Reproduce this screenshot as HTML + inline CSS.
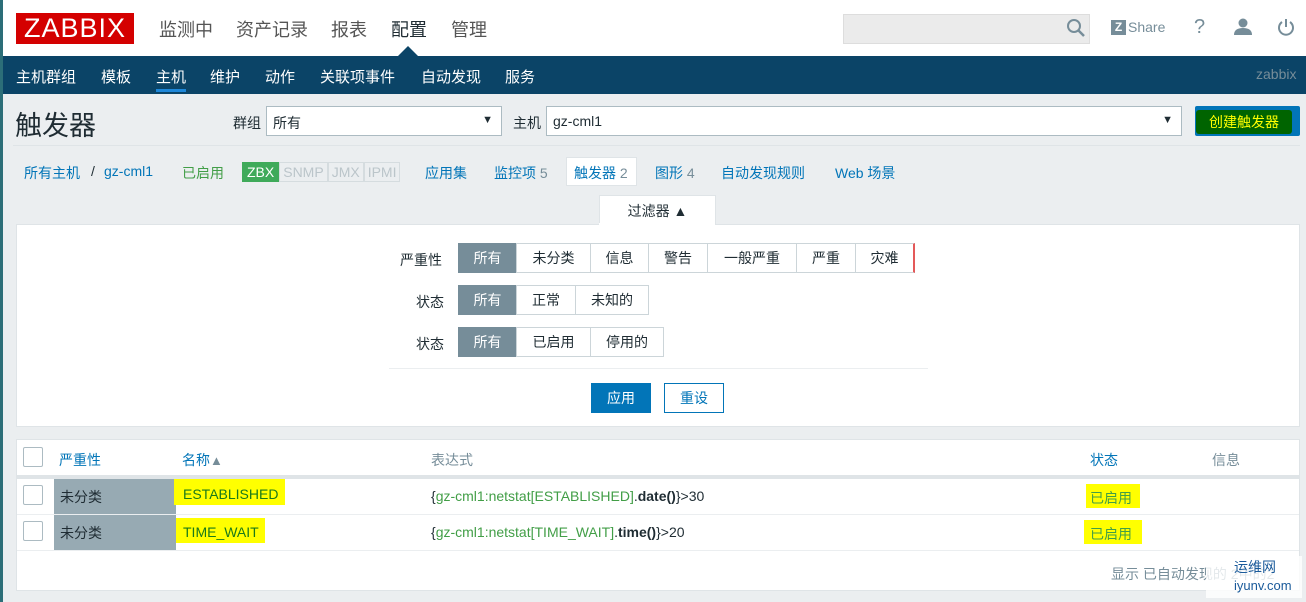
<!DOCTYPE html><html><head><meta charset="utf-8"><style>
*{box-sizing:border-box;margin:0;padding:0}
body{width:1306px;height:602px;overflow:hidden;background:#ebeef0;font-family:"Liberation Sans","Noto Sans CJK SC",sans-serif;font-size:14px;color:#1f2c33;position:relative}
.a{position:absolute;white-space:nowrap}
a{color:#0275b8;text-decoration:none}
.btn{position:absolute;height:30px;border:1px solid #ccd5d9;background:#fff;text-align:center;line-height:28px;font-size:14px}
.sel{background:#768d99;color:#fff;border-color:#768d99}
.n{position:absolute;top:66px;color:#fff;font-size:15px}
.h{position:absolute;top:16px;font-size:18px;color:#555}
</style></head><body>
<div class="a" style="left:0;top:0;width:3px;height:602px;background:#2c6e78"></div>
<div class="a" style="left:3px;top:0;width:1303px;height:56px;background:#fff"></div>
<div class="a" style="left:16px;top:13px;width:118px;height:31px;background:#d40000;color:#fff;font-size:27px;line-height:31px;text-align:center;letter-spacing:1px">ZABBIX</div>
<span class="h" style="left:159px">监测中</span><span class="h" style="left:236px">资产记录</span><span class="h" style="left:331px">报表</span><span class="h" style="left:391px;color:#1f2c33">配置</span><span class="h" style="left:451px">管理</span>
<div class="a" style="left:398px;top:46px;width:0;height:0;border-left:10px solid transparent;border-right:10px solid transparent;border-bottom:10px solid #0b4467"></div>
<div class="a" style="left:843px;top:14px;width:247px;height:30px;background:#ebebeb;border:1px solid #ddd"></div>
<svg class="a" style="left:1066px;top:18px" width="20" height="20"><circle cx="8" cy="8" r="6" fill="none" stroke="#768d99" stroke-width="2"/><line x1="12" y1="12" x2="18" y2="18" stroke="#768d99" stroke-width="2.5"/></svg>
<div class="a" style="left:1111px;top:20px;width:15px;height:15px;background:#768d99;color:#fff;font-size:12px;font-weight:bold;line-height:15px;text-align:center">Z</div>
<div class="a" style="left:1128px;top:19px;color:#768d99;font-size:14px">Share</div>
<div class="a" style="left:1194px;top:16px;color:#768d99;font-size:20px">?</div>
<svg class="a" style="left:1233px;top:18px" width="20" height="18"><circle cx="10" cy="5" r="4.5" fill="#768d99"/><path d="M1 17 Q1 10 10 10 Q19 10 19 17Z" fill="#768d99"/></svg>
<svg class="a" style="left:1276px;top:17px" width="20" height="20"><path d="M6 5 A7 7 0 1 0 14 5" fill="none" stroke="#768d99" stroke-width="2"/><line x1="10" y1="2" x2="10" y2="10" stroke="#768d99" stroke-width="2"/></svg>
<div class="a" style="left:3px;top:56px;width:1303px;height:38px;background:#0b4467"></div>
<span class="n" style="left:16px">主机群组</span><span class="n" style="left:101px">模板</span><span class="n" style="left:156px">主机</span><span class="n" style="left:210px">维护</span><span class="n" style="left:265px">动作</span><span class="n" style="left:320px">关联项事件</span><span class="n" style="left:421px">自动发现</span><span class="n" style="left:505px">服务</span>
<div class="a" style="left:156px;top:89px;width:30px;height:3px;background:#1e87d9"></div>
<div class="a" style="left:1256px;top:66px;color:#768d99;font-size:14px">zabbix</div>
<div class="a" style="left:15px;top:104px;font-size:27px;color:#1f2c33">触发器</div>
<div class="a" style="left:233px;top:113px">群组</div>
<div class="a" style="left:266px;top:106px;width:236px;height:30px;background:#fff;border:1px solid #acbbc2;padding:6px 6px">所有<span style="position:absolute;right:8px;top:7px;font-size:11px">▼</span></div>
<div class="a" style="left:513px;top:113px">主机</div>
<div class="a" style="left:546px;top:106px;width:636px;height:30px;background:#fff;border:1px solid #acbbc2;padding:6px 6px">gz-cml1<span style="position:absolute;right:8px;top:7px;font-size:11px">▼</span></div>
<div class="a" style="left:1195px;top:106px;width:105px;height:30px;background:#0275b8;border-radius:2px"></div>
<div class="a" style="left:1196px;top:110px;width:96px;height:24px;background:#006400;border-radius:3px;color:#ffff00;font-size:14px;text-align:center;line-height:24px">创建触发器</div>
<div class="a" style="left:13px;top:145px;width:1287px;height:1px;background:#dfe4e7"></div>
<div class="a" style="left:24px;top:163px"><a>所有主机</a></div>
<div class="a" style="left:91px;top:163px">/</div>
<div class="a" style="left:104px;top:163px"><a>gz-cml1</a></div>
<div class="a" style="left:182px;top:163px;color:#429e47">已启用</div>
<div class="a" style="left:242px;top:162px;height:20px;font-size:14px;line-height:18px;display:flex">
<span style="background:#3faa5a;color:#fff;padding:0 4px;border:1px solid #3faa5a">ZBX</span><span style="color:#bbc5ca;padding:0 3px;border:1px solid #d5dcdf">SNMP</span><span style="color:#bbc5ca;padding:0 3px;border:1px solid #d5dcdf">JMX</span><span style="color:#bbc5ca;padding:0 3px;border:1px solid #d5dcdf">IPMI</span></div>
<div class="a" style="left:425px;top:163px"><a>应用集</a></div>
<div class="a" style="left:494px;top:163px"><a>监控项 <span style="color:#768d99">5</span></a></div>
<div class="a" style="left:566px;top:157px;width:71px;height:29px;background:#fff;border:1px solid #dfe4e7;padding:5px 7px"><a>触发器 <span style="color:#768d99">2</span></a></div>
<div class="a" style="left:655px;top:163px"><a>图形 <span style="color:#768d99">4</span></a></div>
<div class="a" style="left:721px;top:163px"><a>自动发现规则</a></div>
<div class="a" style="left:835px;top:163px"><a>Web 场景</a></div>
<div class="a" style="left:599px;top:195px;width:117px;height:30px;background:#fff;border:1px solid #dfe4e7;border-bottom:none;text-align:center;line-height:30px">过滤器 ▲</div>
<div class="a" style="left:16px;top:224px;width:1284px;height:203px;background:#fff;border:1px solid #dfe4e7"></div>
<div class="a" style="left:599px;top:223px;width:116px;height:3px;background:#fff"></div>
<div class="a" style="left:400px;top:250px">严重性</div>
<div class="a" style="left:416px;top:292px">状态</div>
<div class="a" style="left:416px;top:334px">状态</div>
<div class="btn sel" style="left:458px;top:243px;width:59px">所有</div>
<div class="btn" style="left:516px;top:243px;width:75px">未分类</div>
<div class="btn" style="left:590px;top:243px;width:59px">信息</div>
<div class="btn" style="left:648px;top:243px;width:60px">警告</div>
<div class="btn" style="left:707px;top:243px;width:90px">一般严重</div>
<div class="btn" style="left:796px;top:243px;width:60px">严重</div>
<div class="btn" style="left:855px;top:243px;width:60px;border-right:2px solid #e45959">灾难</div>
<div class="btn sel" style="left:458px;top:285px;width:59px">所有</div>
<div class="btn" style="left:516px;top:285px;width:60px">正常</div>
<div class="btn" style="left:575px;top:285px;width:74px">未知的</div>
<div class="btn sel" style="left:458px;top:327px;width:59px">所有</div>
<div class="btn" style="left:516px;top:327px;width:75px">已启用</div>
<div class="btn" style="left:590px;top:327px;width:74px">停用的</div>
<div class="a" style="left:389px;top:368px;width:539px;height:1px;background:#ebeef0"></div>
<div class="btn" style="left:591px;top:383px;width:60px;background:#0275b8;color:#fff;border-color:#0275b8">应用</div>
<div class="btn" style="left:664px;top:383px;width:60px;color:#0275b8;border-color:#0275b8">重设</div>
<div class="a" style="left:16px;top:439px;width:1284px;height:152px;background:#fff;border:1px solid #dfe4e7"></div>
<div class="a" style="left:17px;top:475px;width:1282px;height:4px;background:#dfe4e7"></div>
<div class="a" style="left:17px;top:514px;width:1282px;height:1px;background:#ebeef0"></div>
<div class="a" style="left:17px;top:550px;width:1282px;height:1px;background:#ebeef0"></div>
<div class="a" style="left:23px;top:447px;width:20px;height:20px;border:1px solid #acbbc2;border-radius:2px"></div>
<div class="a" style="left:23px;top:485px;width:20px;height:20px;border:1px solid #acbbc2;border-radius:2px"></div>
<div class="a" style="left:23px;top:521px;width:20px;height:20px;border:1px solid #acbbc2;border-radius:2px"></div>
<div class="a" style="left:59px;top:450px"><a>严重性</a></div>
<div class="a" style="left:182px;top:450px"><a>名称</a><span style="color:#768d99;font-size:13px">▲</span></div>
<div class="a" style="left:431px;top:450px;color:#768d99">表达式</div>
<div class="a" style="left:1090px;top:450px"><a>状态</a></div>
<div class="a" style="left:1212px;top:450px;color:#768d99">信息</div>
<div class="a" style="left:54px;top:479px;width:122px;height:35px;background:#97aab3;padding:8px 6px">未分类</div>
<div class="a" style="left:54px;top:515px;width:122px;height:35px;background:#97aab3;padding:8px 6px">未分类</div>
<div class="a" style="left:174px;top:479px;width:111px;height:26px;background:#ffff00;color:#1a7a1a;padding:7px 9px 0">ESTABLISHED</div>
<div class="a" style="left:176px;top:518px;width:89px;height:25px;background:#ffff00;color:#1a7a1a;padding:6px 7px 0">TIME_WAIT</div>
<div class="a" style="left:431px;top:488px">{<span style="color:#429e47">gz-cml1:netstat[ESTABLISHED]</span>.<b>date()</b>}&gt;30</div>
<div class="a" style="left:431px;top:524px">{<span style="color:#429e47">gz-cml1:netstat[TIME_WAIT]</span>.<b>time()</b>}&gt;20</div>
<div class="a" style="left:1086px;top:484px;width:54px;height:24px;background:#ffff00;color:#429e47;padding:4px 4px">已启用</div>
<div class="a" style="left:1084px;top:520px;width:58px;height:24px;background:#ffff00;color:#429e47;padding:4px 6px">已启用</div>
<div class="a" style="left:1111px;top:564px;color:#768d99">显示 已自动发现的 2中的2</div>
<div class="a" style="left:1206px;top:556px;width:96px;height:42px;background:rgba(255,255,255,.8);font-size:14px;color:#1a5a9a;padding:2px 0 0 28px;line-height:18px">运维网<br><span style="font-size:13px">iyunv.com</span></div>
</body></html>
